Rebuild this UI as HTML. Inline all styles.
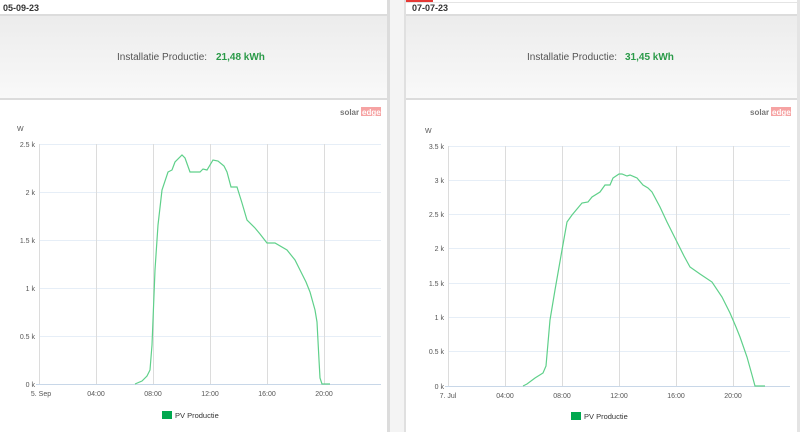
<!DOCTYPE html>
<html><head><meta charset="utf-8">
<style>
html,body{margin:0;padding:0;width:800px;height:432px;overflow:hidden;background:#fff;font-family:"Liberation Sans",sans-serif}
svg{display:block}
text{font-family:"Liberation Sans",sans-serif}
</style></head><body>
<svg width="800" height="432" viewBox="0 0 800 432" xmlns="http://www.w3.org/2000/svg">
<defs>
<linearGradient id="g" x1="0" y1="0" x2="0" y2="1">
<stop offset="0" stop-color="#ececec"/><stop offset="1" stop-color="#f9f9f9"/>
</linearGradient>
</defs>
<rect x="387" y="0" width="19" height="432" fill="#f4f4f4"/>
<rect x="387" y="0" width="3" height="432" fill="#dcdcdc"/>
<rect x="404" y="0" width="2" height="432" fill="#e0e0e0"/>
<rect x="797" y="0" width="3" height="432" fill="#e4e4e4"/>

<text x="3" y="11" font-size="9" font-weight="bold" fill="#333">05-09-23</text>
<rect x="0" y="14" width="387" height="2" fill="#dcdcdc"/>
<rect x="0" y="16" width="387" height="82" fill="url(#g)"/>
<rect x="0" y="98" width="387" height="2" fill="#dcdcdc"/>
<text x="117" y="60" font-size="10" fill="#555">Installatie Productie:</text>
<text x="216" y="60" font-size="10" font-weight="bold" fill="#2a9a48">21,48 kWh</text>
<text x="340" y="115" font-size="8" font-weight="bold" fill="#777">solar</text>
<rect x="361" y="107" width="20" height="9" fill="#f6a3a3"/>
<text x="362" y="115" font-size="8" font-weight="bold" fill="#fff">edge</text>
<text x="17" y="131" font-size="7" fill="#555">W</text>
<g stroke="#e6eef7" stroke-width="1">
<line x1="39" y1="144.5" x2="381" y2="144.5"/><line x1="39" y1="192.5" x2="381" y2="192.5"/>
<line x1="39" y1="240.5" x2="381" y2="240.5"/><line x1="39" y1="288.5" x2="381" y2="288.5"/>
<line x1="39" y1="336.5" x2="381" y2="336.5"/>
</g>
<g stroke="#dcdcdc" stroke-width="1">
<line x1="39.5" y1="144" x2="39.5" y2="384"/><line x1="96.5" y1="144" x2="96.5" y2="384"/>
<line x1="153.5" y1="144" x2="153.5" y2="384"/><line x1="210.5" y1="144" x2="210.5" y2="384"/>
<line x1="267.5" y1="144" x2="267.5" y2="384"/><line x1="324.5" y1="144" x2="324.5" y2="384"/>
</g>
<line x1="36" y1="384.5" x2="381" y2="384.5" stroke="#c8d7e8"/>
<g font-size="7" fill="#555" text-anchor="end">
<text x="35" y="147">2.5 k</text><text x="35" y="195">2 k</text><text x="35" y="243">1.5 k</text>
<text x="35" y="291">1 k</text><text x="35" y="339">0.5 k</text><text x="35" y="387">0 k</text>
</g>
<g font-size="7" fill="#555" text-anchor="middle">
<text x="41" y="396">5. Sep</text><text x="96" y="396">04:00</text><text x="153" y="396">08:00</text>
<text x="210" y="396">12:00</text><text x="267" y="396">16:00</text><text x="324" y="396">20:00</text>
</g>
<polyline fill="none" stroke="#5fd08a" stroke-width="1.2" points="135,384 142,381 147,376 150,370 152,345 155,270 158,225 162,190 168,172 172,170 175,162 182,155 185,158 190,172 200,172 203,169 207,170 213,160 218,161 224,166 227,172 231,187 237,187 242,203 247,220 255,228 260,234 267,243 275,243 287,250 295,260 300,270 306,282 310,292 315,310 317,322 319,360 320,378 322,384 330,384"/>
<rect x="162" y="411" width="10" height="8" fill="#00a84f"/>
<text x="175" y="418" font-size="7.5" fill="#333">PV Productie</text>

<rect x="406" y="0" width="27" height="2" fill="#e53935"/>
<rect x="406" y="2" width="391" height="1" fill="#e4e4e4"/>
<text x="412" y="11" font-size="9" font-weight="bold" fill="#333">07-07-23</text>
<rect x="406" y="14" width="391" height="2" fill="#dcdcdc"/>
<rect x="406" y="16" width="391" height="82" fill="url(#g)"/>
<rect x="406" y="98" width="391" height="2" fill="#dcdcdc"/>
<text x="527" y="60" font-size="10" fill="#555">Installatie Productie:</text>
<text x="625" y="60" font-size="10" font-weight="bold" fill="#2a9a48">31,45 kWh</text>
<text x="750" y="115" font-size="8" font-weight="bold" fill="#777">solar</text>
<rect x="771" y="107" width="20" height="9" fill="#f6a3a3"/>
<text x="772" y="115" font-size="8" font-weight="bold" fill="#fff">edge</text>
<text x="425" y="133" font-size="7" fill="#555">W</text>
<g stroke="#e6eef7" stroke-width="1">
<line x1="448" y1="146.5" x2="790" y2="146.5"/><line x1="448" y1="180.5" x2="790" y2="180.5"/>
<line x1="448" y1="214.5" x2="790" y2="214.5"/><line x1="448" y1="248.5" x2="790" y2="248.5"/>
<line x1="448" y1="283.5" x2="790" y2="283.5"/><line x1="448" y1="317.5" x2="790" y2="317.5"/>
<line x1="448" y1="351.5" x2="790" y2="351.5"/>
</g>
<g stroke="#dcdcdc" stroke-width="1">
<line x1="448.5" y1="146" x2="448.5" y2="386"/><line x1="505.5" y1="146" x2="505.5" y2="386"/>
<line x1="562.5" y1="146" x2="562.5" y2="386"/><line x1="619.5" y1="146" x2="619.5" y2="386"/>
<line x1="676.5" y1="146" x2="676.5" y2="386"/><line x1="733.5" y1="146" x2="733.5" y2="386"/>
</g>
<line x1="445" y1="386.5" x2="790" y2="386.5" stroke="#c8d7e8"/>
<g font-size="7" fill="#555" text-anchor="end">
<text x="444" y="149">3.5 k</text><text x="444" y="183">3 k</text><text x="444" y="217">2.5 k</text>
<text x="444" y="251">2 k</text><text x="444" y="286">1.5 k</text><text x="444" y="320">1 k</text>
<text x="444" y="354">0.5 k</text><text x="444" y="389">0 k</text>
</g>
<g font-size="7" fill="#555" text-anchor="middle">
<text x="448" y="398">7. Jul</text><text x="505" y="398">04:00</text><text x="562" y="398">08:00</text>
<text x="619" y="398">12:00</text><text x="676" y="398">16:00</text><text x="733" y="398">20:00</text>
</g>
<polyline fill="none" stroke="#5fd08a" stroke-width="1.2" points="523,386 527,384 535,378 543,373 546,366 550,320 555,290 562,250 567,222 572,215 582,203 588,202 592,197 600,192 605,185 610,185 613,178 619,174 622,174 627,176 630,175 637,178 643,185 648,188 652,192 660,207 667,222 677,242 684,256 690,267 700,274 712,282 722,297 730,313 736,327 740,337 747,357 752,375 755,386 765,386"/>
<rect x="571" y="412" width="10" height="8" fill="#00a84f"/>
<text x="584" y="419" font-size="7.5" fill="#333">PV Productie</text>
</svg>
</body></html>
